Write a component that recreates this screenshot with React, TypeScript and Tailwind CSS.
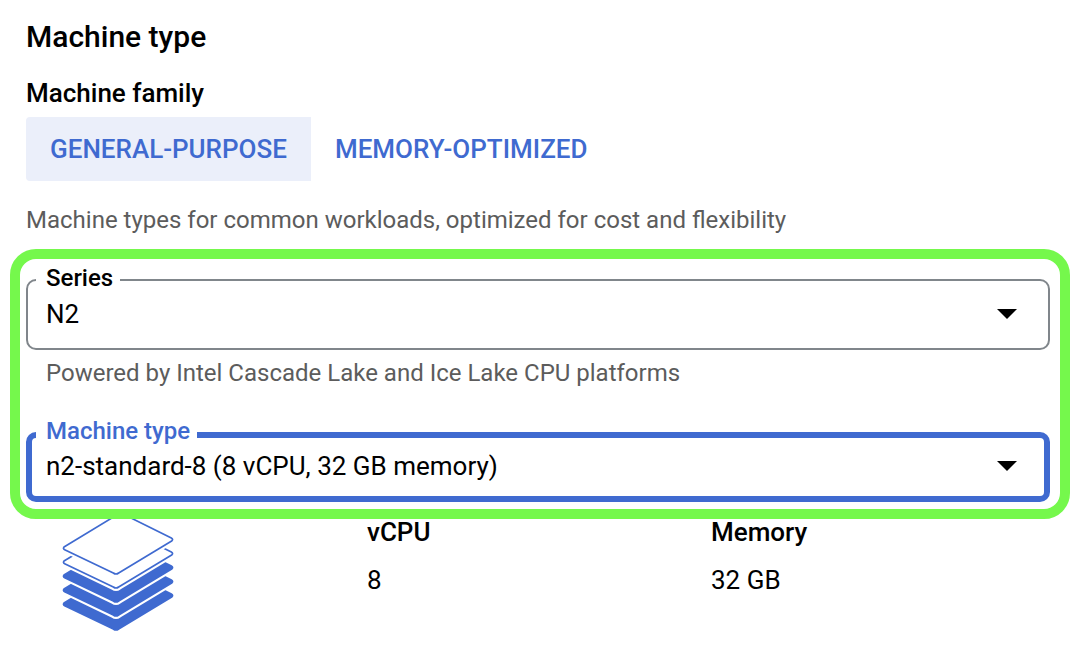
import { useState } from "react";
import type { ReactNode } from "react";

const SHEET =
  "M72 141 L227 47 Q243 38 259 47 L394 114 Q401 118 395 123 L236 219 Q228 225 220 219 L74 149 Q68 146 72 141 Z";

const LAYERS = [
  { offset: 168, solid: true },
  { offset: 126, solid: true },
  { offset: 84, solid: true },
  { offset: 42, solid: false },
  { offset: 0, solid: false },
];

function StackIcon() {
  return (
    <svg viewBox="66 57 336 342" className="h-[114px] w-28" aria-hidden="true">
      {LAYERS.map(({ offset, solid }) => (
        <g key={offset} transform={`translate(0 ${offset})`} strokeLinejoin="round">
          <path d={SHEET} fill="white" stroke="white" strokeWidth="18" />
          <path d={SHEET} fill={solid ? "#3f6ad0" : "white"} stroke="#3f6ad0" strokeWidth="5" />
        </g>
      ))}
    </svg>
  );
}

function Caret() {
  return (
    <svg
      viewBox="0 0 20 10"
      className="pointer-events-none absolute inset-y-0 right-6 my-auto h-2.5 w-5"
      aria-hidden="true"
    >
      <path d="M0 0H20L10 10Z" fill="black" />
    </svg>
  );
}

interface SelectBoxProps {
  id: string;
  value: string;
  onChange: (value: string) => void;
  className: string;
  children: ReactNode;
}

function SelectBox({ id, value, onChange, className, children }: SelectBoxProps) {
  return (
    <div className="relative">
      <select
        id={id}
        value={value}
        onChange={(e) => onChange(e.target.value)}
        className={`block w-full appearance-none bg-transparent pr-14 text-[26px] leading-[30px] text-black outline-none ${className}`}
      >
        {children}
      </select>
      <Caret />
    </div>
  );
}

const FAMILIES = ["GENERAL-PURPOSE", "MEMORY-OPTIMIZED"];

export default function App() {
  const [family, setFamily] = useState(FAMILIES[0]);
  const [series, setSeries] = useState("N2");
  const [machine, setMachine] = useState("n2-standard-8");

  return (
    <main className="min-h-screen bg-white pt-[17px] pb-6 font-['Roboto',sans-serif] text-black">
      <div className="pr-[38px] pl-[26px]">
        <h1 className="text-[30px] leading-10 font-medium">Machine type</h1>
        <h2 className="mt-5 text-[26px] leading-8 font-medium">Machine family</h2>
        <div className="mt-2 flex" role="group" aria-label="Machine family">
          {FAMILIES.map((name) => (
            <button
              key={name}
              type="button"
              aria-pressed={family === name}
              onClick={() => setFamily(name)}
              className={`h-16 rounded-l px-6 text-[26px] leading-8 font-medium text-[#3f6ad0] ${
                family === name ? "bg-[#ebeffa]" : "bg-white"
              }`}
            >
              {name}
            </button>
          ))}
        </div>
        <p className="mt-[23px] text-2xl leading-8 text-[#5c5c5c]">
          Machine types for common workloads, optimized for cost and flexibility
        </p>
      </div>

      <section className="mt-[13px] mr-[18px] ml-2.5 rounded-[26px] border-10 border-[#75f84c] py-[7px] pr-2.5 pl-1.5">
        <fieldset className="rounded-[10px] border-2 border-[#80868b] pr-[7px] pb-3.5 pl-2">
          <legend className="pr-[7px] pb-1 pl-2.5 text-2xl leading-6 font-medium">
            <label htmlFor="series" className="block">Series</label>
          </legend>
          <SelectBox id="series" value={series} onChange={setSeries} className="h-10 pl-2.5">
            <option value="N2">N2</option>
          </SelectBox>
        </fieldset>
        <p className="mt-[7px] pl-5 text-2xl leading-8 text-[#5c5c5c]">
          Powered by Intel Cascade Lake and Ice Lake CPU platforms
        </p>
        <fieldset className="mt-[30px] rounded-[10px] border-6 border-[#3f6ad0] pr-[3px] pb-[15px] pl-1">
          <legend className="pr-[7px] pb-2 pl-2.5 text-2xl leading-6 font-medium text-[#3f6ad0]">
            <label htmlFor="machine-type" className="block">Machine type</label>
          </legend>
          <SelectBox id="machine-type" value={machine} onChange={setMachine} className="h-[30px] pl-2.5">
            <option value="n2-standard-8">n2-standard-8 (8 vCPU, 32 GB memory)</option>
          </SelectBox>
        </fieldset>
      </section>

      <div className="grid grid-cols-3 pr-[33px] pl-[23px] text-[26px] leading-[26px]">
        <div className="pl-[39px]">
          <StackIcon />
        </div>
        <dl>
          <dt className="font-medium">vCPU</dt>
          <dd className="mt-[22px]">8</dd>
        </dl>
        <dl>
          <dt className="font-medium">Memory</dt>
          <dd className="mt-[22px]">32 GB</dd>
        </dl>
      </div>
    </main>
  );
}
